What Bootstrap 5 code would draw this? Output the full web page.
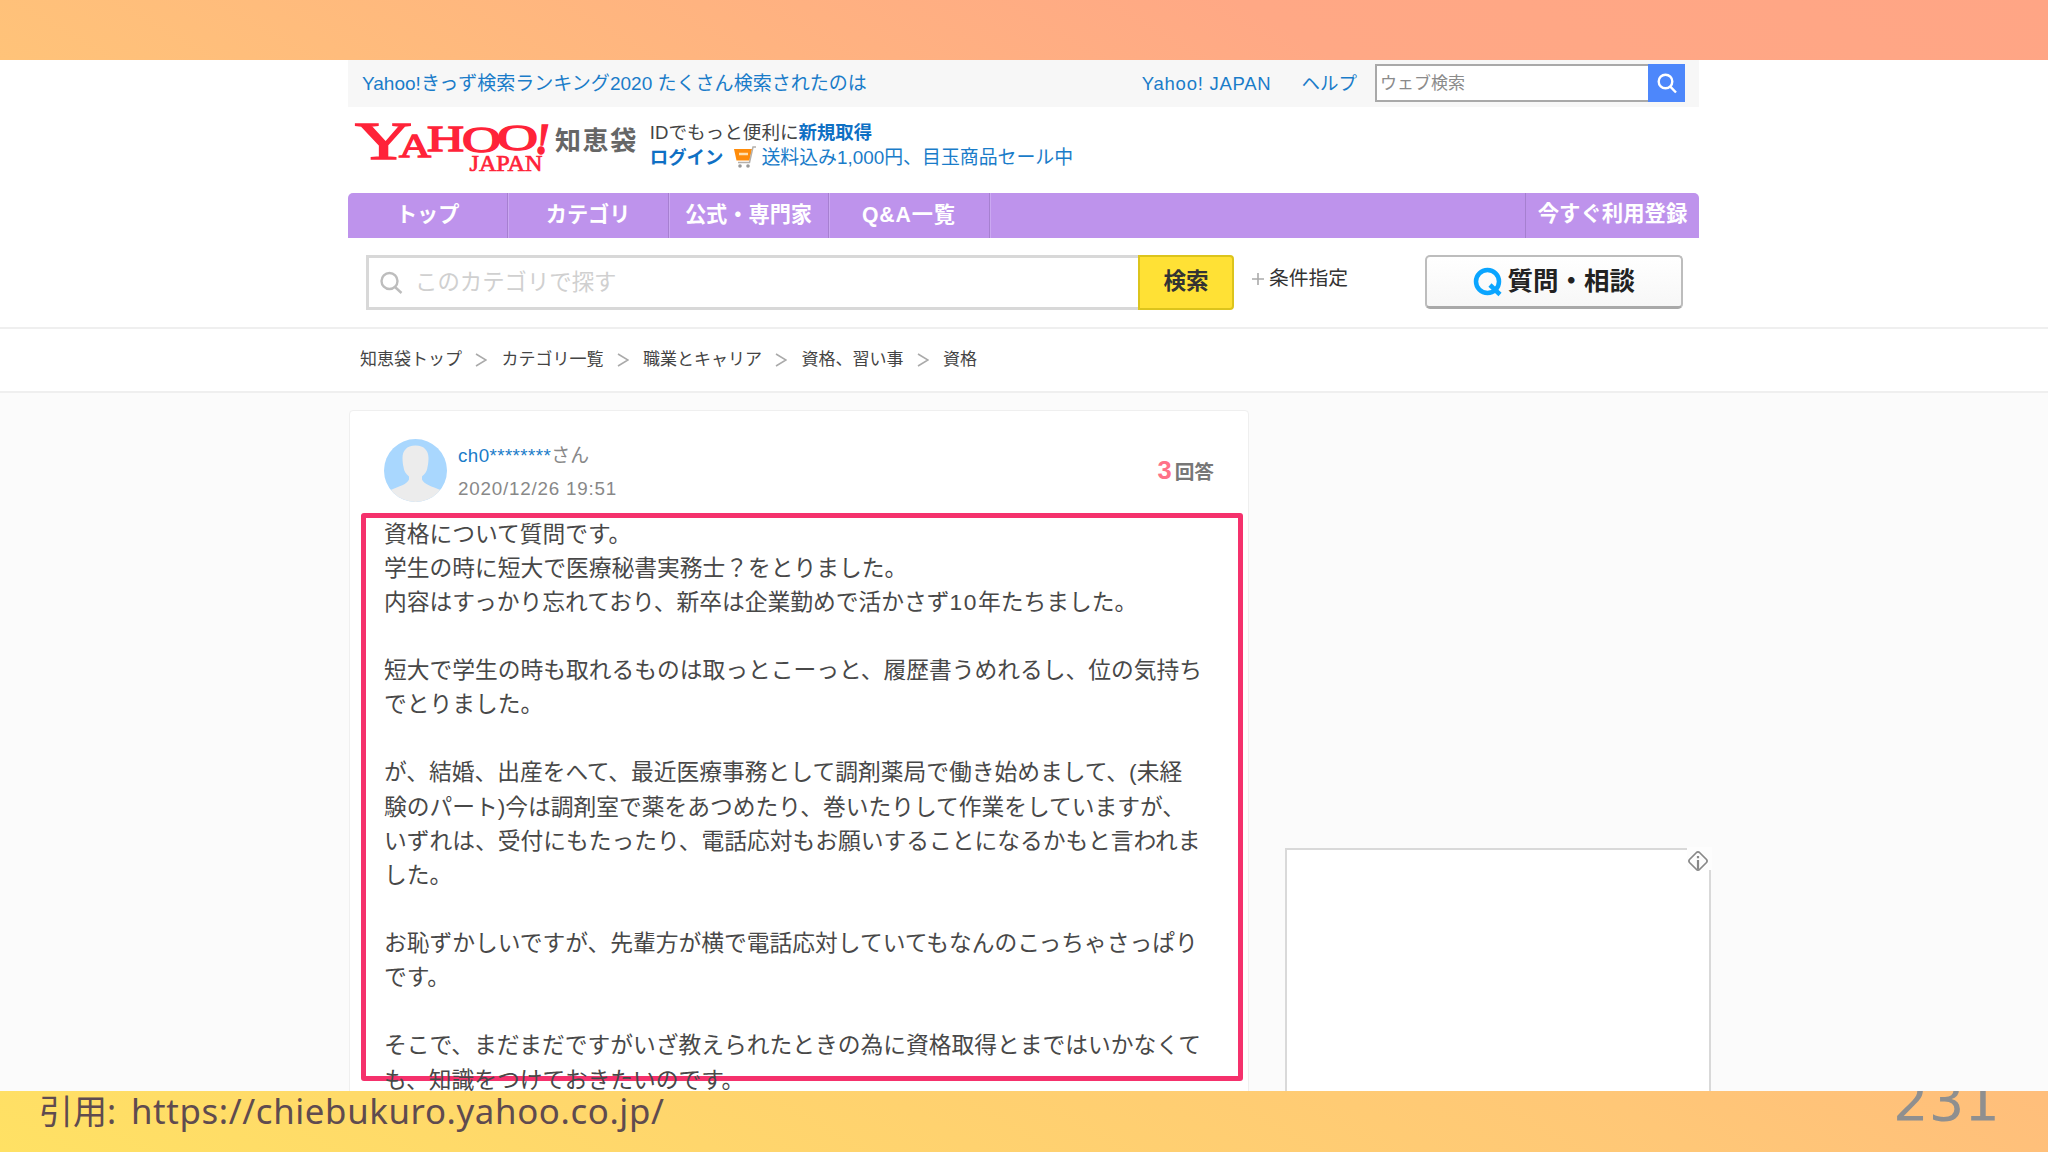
<!DOCTYPE html>
<html lang="ja">
<head>
<meta charset="utf-8">
<title>Yahoo!知恵袋</title>
<link href="https://cdn.jsdelivr.net/npm/bootstrap@5.3.0/dist/css/bootstrap.min.css" rel="stylesheet">
<style>
body{font-family:"Liberation Sans","Noto Sans CJK JP",sans-serif;color:#444;height:1152px;overflow:hidden;background:linear-gradient(30deg,#ffe164 0%,#ffc777 42%,#ffa885 80%,#ffa585 100%)}
a{text-decoration:none;color:#1a7cc9}
.slide-top{height:60px}
.site{height:1031px;background:#fff}
.wrap{width:1351px;margin-left:348px}
.util{height:47px;background:#f7f7f7;font-size:18.5px;line-height:45px;padding-left:14px}
.topic{font-size:19.05px}
.yj{letter-spacing:.75px}
.util-help{margin-left:30px;margin-right:18px}
.websearch{width:310px;height:38px;margin-right:14px;margin-top:-1px}
.websearch .fieldbox{border:2px solid #a9a9a9;border-right:0;background:#fff;line-height:35px;font-size:17px;color:#8b8b8b;padding-left:3px}
.websearch .go{width:37px;background:#4d87fb}
.brand-row{height:85.5px;padding-left:7px}
.logo{overflow:visible}
.chie{font-size:26px;font-weight:700;letter-spacing:1.6px;color:#666;line-height:30px;margin:19px 0 0 5px}
.idbox{font-size:18.6px;line-height:25px;margin:13px 0 0 12px}
.idbox b{color:#0f70c4;font-size:18.4px}
.idbox a{font-size:18.9px}
.mainnav{height:45px;background:#be93ec;border-radius:5px 5px 0 0;color:#fff;font-size:21.2px;font-weight:700;line-height:43px;text-align:center}
.mainnav>div{width:160.4px;border-right:1px solid #a680d0;box-shadow:1px 0 0 #cba8f2}
.mainnav .qa{letter-spacing:.9px}
.mainnav .reg{width:174px;border:0;border-left:1px solid #a680d0;box-shadow:none;font-size:21.4px}
.searchrow{height:89.5px;padding:17.500px 0 0 18px}
.q-field{width:773px;height:55px;border:3px solid #d8d8d8;border-right:0;padding-left:11px;color:#d0d0d0;font-size:22.4px}
.q-field svg{margin-right:12px}
.q-btn{width:96px;height:55px;background:#ffe135;border:2px solid #dcc41c;border-radius:0 4px 4px 0;color:#333;font-weight:700;font-size:22.6px;line-height:50px;text-align:center;margin-left:-1px}
.cond{font-size:19.8px;color:#333;margin:9px 0 0 17px}
.ask{width:258px;height:54px;margin-left:77px;border:2px solid #bdbdbd;border-bottom:3px solid #a9a9a9;border-radius:5px;background:linear-gradient(#fff,#f7f7f7);font-size:25.5px;font-weight:700;color:#222}
.crumbs{height:66px;border-top:2px solid #efefef;border-bottom:2px solid #efefef;font-size:17px;color:#444;padding-left:360px;line-height:60px}
.crumbs svg{margin:0 14.2px 0 13.3px}
.content{background:#fbfbfb;height:698px;overflow:hidden;padding:17px 0 0 349px}
.qcard{width:900px;height:720px;background:#fff;border:1px solid #efefef;border-radius:4px}
.who{padding:28px 34px 0 34px;height:101.5px}
.uname{font-size:18.8px;line-height:26px;margin:4px 0 0 11px;color:#888}
.uname .nm{letter-spacing:.4px}
.udate{line-height:39px;letter-spacing:.8px}
.answers{margin-top:13px;font-size:19.7px;font-weight:700;color:#777;line-height:36px}
.answers b{font-size:25.5px;color:#ff7288;margin-right:3px}
.hl{width:882px;height:568px;margin-left:11px;border:5px solid #f5316c;border-radius:3px}
.qtext{font-size:22.75px;line-height:34.12px;padding-left:18px;white-space:pre;color:#484848;margin:-1px 0 0}
.dig{letter-spacing:1.5px}
.ad{width:426px;height:300px;margin:438px 0 0 36px;border:2px solid #d9d9d9;background:#fff}
.ad-mark{right:-3px;top:-3px;width:25px;height:23px;background:#fdfdfd}
.foot{height:61px;overflow:hidden;font-family:"Noto Sans","Noto Sans CJK JP",sans-serif;color:#5f4b4f;padding:0 48px 0 39px}
.cite{font-size:34px;line-height:40px;white-space:pre}
.cite span{font-size:34.8px;letter-spacing:.62px;margin-left:6px}
.pageno{font-family:"DejaVu Sans",sans-serif;font-size:56px;line-height:56px;color:#8f8f8f;margin-top:-18px}
</style>
<script src="https://cdn.jsdelivr.net/npm/bootstrap@5.3.0/dist/js/bootstrap.bundle.min.js"></script>
</head>
<body>
<div class="slide-top"></div>
<main class="site overflow-hidden">
 <div class="wrap">
  <div class="util d-flex align-items-center">
   <a href="#" class="topic me-auto">Yahoo!きっず検索ランキング2020 たくさん検索されたのは</a>
   <a href="#" class="yj">Yahoo! JAPAN</a>
   <a href="#" class="util-help">ヘルプ</a>
   <div class="websearch d-flex">
    <div class="fieldbox flex-grow-1">ウェブ検索</div>
    <div class="go d-flex align-items-center justify-content-center"><svg width="22" height="22" viewBox="0 0 22 22" fill="none" stroke="#fff" stroke-width="2.4"><circle cx="9.5" cy="9.5" r="6.8"/><path d="M14.3 14.6 20 20.5"/></svg></div>
   </div>
  </div>
  <div class="brand-row d-flex">
   <svg class="logo" width="195" height="70" viewBox="355 107 195 70" font-family="Liberation Serif,serif" fill="#ff2339" stroke="#ff2339" stroke-width="1.300">
    <text x="355" y="158.500" font-size="52" textLength="57" lengthAdjust="spacingAndGlyphs">Y</text>
    <text x="399" y="157" font-size="34" textLength="32" lengthAdjust="spacingAndGlyphs">A</text>
    <text x="427" y="151" font-size="35" textLength="37" lengthAdjust="spacingAndGlyphs">H</text>
    <text x="462" y="152" font-size="35" textLength="39" lengthAdjust="spacingAndGlyphs">O</text>
    <text x="497" y="150" font-size="36" textLength="41" lengthAdjust="spacingAndGlyphs">O</text>
    <text x="535" y="154" font-size="45" font-style="italic" font-weight="bold" textLength="15" lengthAdjust="spacingAndGlyphs">!</text>
    <text x="469.500" y="170.500" font-size="23" stroke-width=".7" textLength="73" lengthAdjust="spacingAndGlyphs">JAPAN</text>
   </svg>
   <div class="chie">知恵袋</div>
   <div class="idbox">
    <div>IDでもっと便利に<b>新規取得</b></div>
    <div class="d-flex align-items-center"><b>ログイン</b>
     <svg class="me-1" style="margin-left:9px" width="25" height="23" viewBox="0 0 25 23"><path d="M2 3h18l-2.5 11.5h-13z" fill="#ff8c0a"/><path d="M24 1h-3l-3.5 15.5H6" fill="none" stroke="#b5b0aa" stroke-width="1.5"/><path d="M7 8h9" stroke="#ffe0b0" stroke-width="2.5"/><circle cx="8" cy="20" r="1.8" fill="#999"/><circle cx="16" cy="20" r="1.8" fill="#999"/></svg>
     <a href="#">送料込み1,000円、目玉商品セール中</a></div>
   </div>
  </div>
  <nav class="mainnav d-flex">
   <div>トップ</div><div>カテゴリ</div><div>公式・専門家</div><div class="qa">Q&amp;A一覧</div><div class="reg ms-auto">今すぐ利用登録</div>
  </nav>
  <div class="searchrow d-flex align-items-start">
   <div class="q-field d-flex align-items-center"><svg width="23" height="23" viewBox="0 0 23 23" fill="none" stroke="#bdbdbd" stroke-width="2.4"><circle cx="9.5" cy="10" r="8"/><path d="M15 16l6.500 6"/></svg>このカテゴリで探す</div>
   <div class="q-btn">検索</div>
   <div class="cond d-flex align-items-center"><svg class="me-1" width="14" height="14" stroke="#aaa" stroke-width="1.6"><path d="M7 1v12M1 7h12"/></svg>条件指定</div>
   <div class="ask d-flex align-items-center justify-content-center"><svg class="me-1" width="30" height="30" viewBox="0 0 30 30" fill="none" stroke="#0aa5ff" stroke-width="4.500"><circle cx="14.500" cy="14.500" r="11.500"/><path d="M17 18l10 9.500"/></svg>質問・相談</div>
  </div>
 </div>
 <div class="crumbs d-flex align-items-center">
  知恵袋トップ<svg width="12" height="14" fill="none" stroke="#aaa" stroke-width="1.6"><path d="M1 1l10 6-10 6"/></svg>カテゴリ一覧<svg width="12" height="14" fill="none" stroke="#aaa" stroke-width="1.6"><path d="M1 1l10 6-10 6"/></svg>職業とキャリア<svg width="12" height="14" fill="none" stroke="#aaa" stroke-width="1.6"><path d="M1 1l10 6-10 6"/></svg>資格、習い事<svg width="12" height="14" fill="none" stroke="#aaa" stroke-width="1.6"><path d="M1 1l10 6-10 6"/></svg>資格
 </div>
 <div class="content d-flex">
  <section class="qcard flex-shrink-0">
   <div class="who d-flex">
    <svg width="63" height="63" viewBox="0 0 63 63"><defs><clipPath id="av"><circle cx="31.500" cy="31.500" r="31.500"/></clipPath></defs><g clip-path="url(#av)"><path fill="#a9d7fe" d="M0 0h63v63H0z"/><path fill="#ececec" d="M31.500 6.500c9 0 13 5.500 13 12.500 0 4-.5 7-1 9-.5 5-3 7-5.500 9.500v3c2 5 10 7 18.500 10.500L52 64H11L6.500 51C15 47.500 23.500 45 25 40.500v-3c-3-2.500-5-5-5.500-9.500-.5-2-1-5-1-9 0-7 4-12.500 13-12.500z"/></g></svg>
    <div class="uname me-auto"><div class="nm"><a href="#">ch0********</a>さん</div><div class="udate">2020/12/26 19:51</div></div>
    <div class="answers"><b>3</b>回答</div>
   </div>
   <div class="hl"><p class="qtext">資格について質問です。
学生の時に短大で医療秘書実務士？をとりました。
内容はすっかり忘れており、新卒は企業勤めで活かさず<span class="dig">10</span>年たちました。

短大で学生の時も取れるものは取っとこーっと、履歴書うめれるし、位の気持ち
でとりました。

が、結婚、出産をへて、最近医療事務として調剤薬局で働き始めまして、(未経
験のパート)今は調剤室で薬をあつめたり、巻いたりして作業をしていますが、
いずれは、受付にもたったり、電話応対もお願いすることになるかもと言われま
した。

お恥ずかしいですが、先輩方が横で電話応対していてもなんのこっちゃさっぱり
です。

そこで、まだまだですがいざ教えられたときの為に資格取得とまではいかなくて
も、知識をつけておきたいのです。</p></div>
  </section>
  <aside class="ad position-relative flex-shrink-0"><div class="ad-mark position-absolute"><svg class="d-block ms-auto me-1 mt-1" width="20" height="20" viewBox="0 0 20 20" fill="none" stroke="#888" stroke-width="1.700" stroke-linejoin="round"><path d="M8.500 1.500 1.500 8.500q-1.200 1.500 0 3l7 7q1.500 1.200 3 0l7-7q1.200-1.500 0-3l-7-7q-1.500-1.200-3 0z"/><path stroke-width="2.200" d="M10 5v2.200M10 9v9"/></svg></div></aside>
 </div>
</main>
<footer class="foot d-flex justify-content-between align-items-start">
 <div class="cite">引用: <span>https://chiebukuro.yahoo.co.jp/</span></div>
 <div class="pageno">231</div>
</footer>
</body>
</html>
